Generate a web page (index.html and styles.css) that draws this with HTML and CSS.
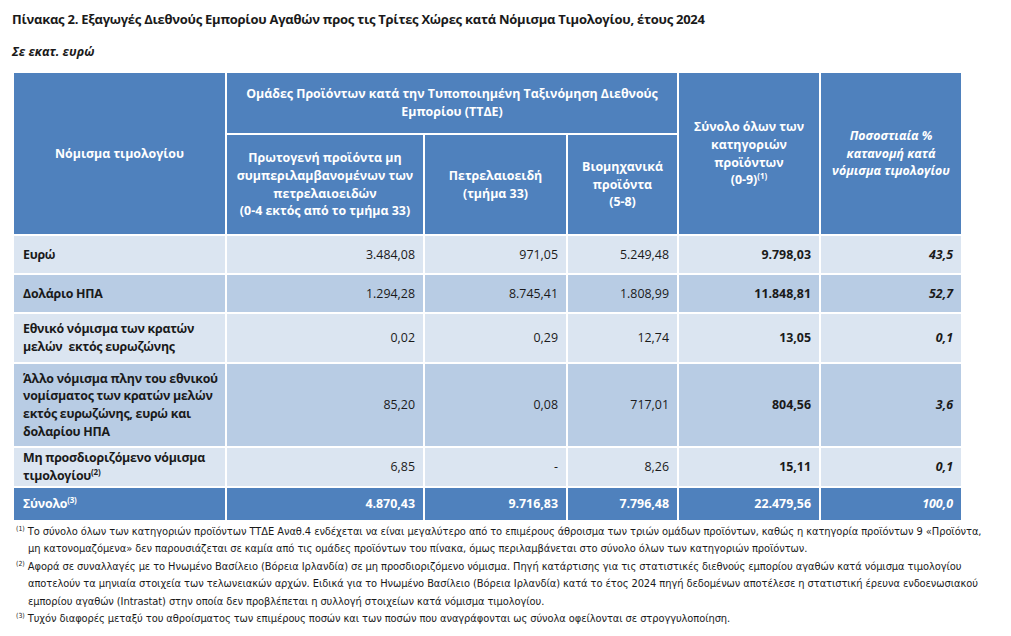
FILE: index.html
```html
<!DOCTYPE html>
<html lang="el">

<head>
    <meta charset="UTF-8">
    <meta name="viewport" content="width=device-width, initial-scale=1.0">
    <title>Πίνακας 2</title>

    <link rel="stylesheet" href="styles.css">
</head>

<body>

    <div id="report">
        <h1 class="table-title">Πίνακας 2. Εξαγωγές Διεθνούς Εμπορίου Αγαθών προς τις Τρίτες Χώρες κατά Νόμισμα Τιμολογίου, έτους 2024</h1>
        <p class="unit">Σε εκατ. ευρώ</p>

        <table class="trade-table">
            <colgroup>
                <col class="c-name">
                <col class="c-prim">
                <col class="c-oil">
                <col class="c-ind">
                <col class="c-total">
                <col class="c-pct">
            </colgroup>
            <thead>
                <tr class="head-top">
                    <th rowspan="2">Νόμισμα τιμολογίου</th>
                    <th colspan="3">Ομάδες Προϊόντων κατά την Τυποποιημένη Ταξινόμηση Διεθνούς<br>Εμπορίου (ΤΤΔΕ)</th>
                    <th rowspan="2">Σύνολο όλων των<br>κατηγοριών<br>προϊόντων<br>(0-9)<sup>(1)</sup></th>
                    <th rowspan="2" class="italic">Ποσοστιαία %<br>κατανομή κατά<br>νόμισμα τιμολογίου</th>
                </tr>
                <tr class="head-sub">
                    <th>Πρωτογενή προϊόντα μη<br>συμπεριλαμβανομένων των<br>πετρελαιοειδών<br>(0-4 εκτός από το τμήμα 33)</th>
                    <th>Πετρελαιοειδή<br>(τμήμα 33)</th>
                    <th>Βιομηχανικά<br>προϊόντα<br>(5-8)</th>
                </tr>
            </thead>
            <tbody>
                <tr class="light row-1">
                    <td>Ευρώ</td>
                    <td>3.484,08</td>
                    <td>971,05</td>
                    <td>5.249,48</td>
                    <td class="sum">9.798,03</td>
                    <td class="pct">43,5</td>
                </tr>
                <tr class="dark row-1">
                    <td>Δολάριο ΗΠΑ</td>
                    <td>1.294,28</td>
                    <td>8.745,41</td>
                    <td>1.808,99</td>
                    <td class="sum">11.848,81</td>
                    <td class="pct">52,7</td>
                </tr>
                <tr class="light row-2">
                    <td>Εθνικό νόμισμα των κρατών<br>μελών&nbsp; εκτός ευρωζώνης</td>
                    <td>0,02</td>
                    <td>0,29</td>
                    <td>12,74</td>
                    <td class="sum">13,05</td>
                    <td class="pct">0,1</td>
                </tr>
                <tr class="dark row-4">
                    <td>Άλλο νόμισμα πλην του εθνικού<br>νομίσματος των κρατών μελών<br>εκτός ευρωζώνης, ευρώ και<br>δολαρίου ΗΠΑ</td>
                    <td>85,20</td>
                    <td>0,08</td>
                    <td>717,01</td>
                    <td class="sum">804,56</td>
                    <td class="pct">3,6</td>
                </tr>
                <tr class="light row-1b">
                    <td>Μη προσδιοριζόμενο νόμισμα<br>τιμολογίου<sup>(2)</sup></td>
                    <td>6,85</td>
                    <td>-</td>
                    <td>8,26</td>
                    <td class="sum">15,11</td>
                    <td class="pct">0,1</td>
                </tr>
                <tr class="total">
                    <td>Σύνολο<sup>(3)</sup></td>
                    <td>4.870,43</td>
                    <td>9.716,83</td>
                    <td>7.796,48</td>
                    <td>22.479,56</td>
                    <td class="pct">100,0</td>
                </tr>
            </tbody>
        </table>

        <div class="notes">
            <p><sup>(1)</sup> Το σύνολο όλων των κατηγοριών προϊόντων ΤΤΔΕ Αναθ.4 ενδέχεται να είναι μεγαλύτερο από το επιμέρους άθροισμα των τριών ομάδων προϊόντων, καθώς η κατηγορία προϊόντων 9 «Προϊόντα,<br>μη κατονομαζόμενα» δεν παρουσιάζεται σε καμία από τις ομάδες προϊόντων του πίνακα, όμως περιλαμβάνεται στο σύνολο όλων των κατηγοριών προϊόντων.</p>
            <p><sup>(2)</sup> Αφορά σε συναλλαγές με το Ηνωμένο Βασίλειο (Βόρεια Ιρλανδία) σε μη προσδιοριζόμενο νόμισμα. Πηγή κατάρτισης για τις στατιστικές διεθνούς εμπορίου αγαθών κατά νόμισμα τιμολογίου<br>αποτελούν τα μηνιαία στοιχεία των τελωνειακών αρχών. Ειδικά για το Ηνωμένο Βασίλειο (Βόρεια Ιρλανδία) κατά το έτος 2024 πηγή δεδομένων αποτέλεσε η στατιστική έρευνα ενδοενωσιακού<br>εμπορίου αγαθών (Intrastat) στην οποία δεν προβλέπεται η συλλογή στοιχείων κατά νόμισμα τιμολογίου.</p>
            <p><sup>(3)</sup> Τυχόν διαφορές μεταξύ του αθροίσματος των επιμέρους ποσών και των ποσών που αναγράφονται ως σύνολα οφείλονται σε στρογγυλοποίηση.</p>
        </div>
    </div>

</body>

</html>
```

FILE: styles.css
```css
body {
    margin: 0;
    background-color: white;
    font-family: "Open Sans", "Noto Sans", sans-serif;
    color: #1a1a1a;
}

#report {
    padding: 8px 0 0 12px;
    width: 985px;
}

.table-title {
    font-size: 13px;
    font-weight: bold;
    margin: 0;
    height: 22px;
    line-height: 22px;
    letter-spacing: -0.25px;
}

.unit {
    font-size: 12.5px;
    font-weight: bold;
    font-style: italic;
    margin: 12px 0 0 0;
    height: 20px;
    line-height: 20px;
}

.trade-table {
    border-collapse: collapse;
    table-layout: fixed;
    width: 949px;
    margin-top: 9px;
    font-size: 12.4px;
    line-height: 17.6px;
}

.c-name { width: 213px; }
.c-prim { width: 198px; }
.c-oil { width: 143px; }
.c-ind { width: 111px; }
.c-total { width: 142px; }
.c-pct { width: 142px; }

.trade-table th,
.trade-table td {
    border: 2px solid white;
    padding: 0 8px;
}

.trade-table th {
    background-color: #4f81bd;
    color: white;
    font-weight: bold;
    text-align: center;
    vertical-align: middle;
}

.trade-table th.italic {
    font-style: italic;
}

.head-top {
    height: 62px;
}

.head-sub {
    height: 101px;
}

.trade-table td {
    text-align: right;
    vertical-align: middle;
}

.trade-table td:first-child {
    text-align: left;
    font-weight: bold;
    padding: 0 0 0 9px;
    white-space: nowrap;
    overflow: hidden;
    letter-spacing: -0.25px;
}

.light td {
    background-color: #dbe5f1;
}

.dark td {
    background-color: #b8cce4;
}

.row-1 { height: 39px; }
.row-1b { height: 40px; }
.row-2 { height: 50px; }
.row-4 { height: 84px; }

td.sum {
    font-weight: bold;
}

td.pct {
    font-weight: bold;
    font-style: italic;
}

.total {
    height: 34px;
}

.total td {
    background-color: #4f81bd;
    color: white;
    font-weight: bold;
}

sup {
    font-size: 8px;
    line-height: 0;
    vertical-align: 5px;
}

.notes {
    margin-top: 1px;
    font-family: "DejaVu Sans", sans-serif;
    font-stretch: condensed;
    font-size: 11px;
    line-height: 17.4px;
    color: #1a1a1a;
    letter-spacing: -0.08px;
}

.notes p {
    margin: 0;
    padding-left: 16px;
    text-indent: -12px;
}

.notes sup {
    font-size: 7px;
    vertical-align: 4px;
}
```
